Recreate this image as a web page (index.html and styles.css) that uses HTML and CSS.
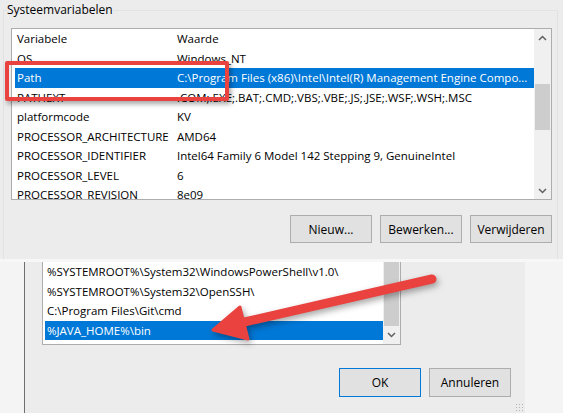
FILE: index.html
```html
<!DOCTYPE html>
<html lang="nl">
<head>
    <meta charset="UTF-8">
    <meta name="viewport" content="width=device-width, initial-scale=1.0">
    <title>Omgevingsvariabelen</title>
    <link rel="stylesheet" href="styles.css">
</head>
<body>
<div class="screen">
    <div class="sys-dialog">
        <fieldset class="group">
            <legend>Systeemvariabelen</legend>
            <div class="listview">
                <div class="lv-rows">
                    <div class="lv-row"><span class="col-name">Variabele</span><span class="col-val">Waarde</span></div>
                    <div class="lv-row"><span class="col-name">OS</span><span class="col-val">Windows_NT</span></div>
                    <div class="lv-row selected"><span class="col-name">Path</span><span class="col-val">C:\Program Files (x86)\Intel\Intel(R) Management Engine Compo...</span></div>
                    <div class="lv-row"><span class="col-name">PATHEXT</span><span class="col-val">.COM;.EXE;.BAT;.CMD;.VBS;.VBE;.JS;.JSE;.WSF;.WSH;.MSC</span></div>
                    <div class="lv-row"><span class="col-name">platformcode</span><span class="col-val">KV</span></div>
                    <div class="lv-row"><span class="col-name">PROCESSOR_ARCHITECTURE</span><span class="col-val">AMD64</span></div>
                    <div class="lv-row"><span class="col-name">PROCESSOR_IDENTIFIER</span><span class="col-val">Intel64 Family 6 Model 142 Stepping 9, GenuineIntel</span></div>
                    <div class="lv-row"><span class="col-name">PROCESSOR_LEVEL</span><span class="col-val">6</span></div>
                    <div class="lv-row"><span class="col-name">PROCESSOR_REVISION</span><span class="col-val">8e09</span></div>
                </div>
                <div class="vscroll">
                    <span class="sb-arrow"><svg width="9" height="6" viewBox="0 0 9 6"><path d="M1 5 L4.5 1.5 L8 5" fill="none" stroke="#606060" stroke-width="1.5"/></svg></span>
                    <span class="sb-track"><span class="sb-thumb sys-thumb"></span></span>
                    <span class="sb-arrow"><svg width="9" height="6" viewBox="0 0 9 6"><path d="M1 1 L4.5 4.5 L8 1" fill="none" stroke="#606060" stroke-width="1.5"/></svg></span>
                </div>
            </div>
            <div class="btn-row">
                <button class="btn">Nieuw...</button>
                <button class="btn">Bewerken...</button>
                <button class="btn">Verwijderen</button>
            </div>
        </fieldset>
    </div>

    <div class="edit-dialog">
        <div class="edit-frame">
            <div class="path-list">
                <div class="pl-rows">
                    <div class="pl-row">%SYSTEMROOT%\System32\WindowsPowerShell\v1.0\</div>
                    <div class="pl-row">%SYSTEMROOT%\System32\OpenSSH\</div>
                    <div class="pl-row">C:\Program Files\Git\cmd</div>
                    <div class="pl-row selected">%JAVA_HOME%\bin</div>
                </div>
                <div class="vscroll">
                    <span class="sb-track"><span class="sb-thumb path-thumb"></span></span>
                    <span class="sb-arrow"><svg width="9" height="6" viewBox="0 0 9 6"><path d="M1 1 L4.5 4.5 L8 1" fill="none" stroke="#606060" stroke-width="1.5"/></svg></span>
                </div>
            </div>
            <div class="btn-row edit-buttons">
                <button class="btn default">OK</button>
                <button class="btn">Annuleren</button>
            </div>
            <span class="grip"></span>
        </div>
    </div>

    <!-- annotaties -->
    <div class="callout-box"></div>
    <svg class="callout-arrow" width="563" height="413" viewBox="0 0 563 413">
        <line x1="432" y1="279" x2="240" y2="323" stroke="#e9423f" stroke-width="9" stroke-linecap="round"/>
        <polygon points="213,330 240,307 248,339" fill="#e9423f" stroke="#e9423f" stroke-width="3" stroke-linejoin="round"/>
    </svg>
</div>
</body>
</html>
```

FILE: styles.css
```css
* {
    box-sizing: border-box;
}

body {
    margin: 0;
    font-family: 'Open Sans', 'Noto Sans', sans-serif;
    font-size: 11.5px;
    color: #000;
    background: #f4f4f4;
}

.screen {
    position: relative;
    width: 563px;
    height: 413px;
    overflow: hidden;
}

/* bovenste venster */
.sys-dialog {
    height: 262px;
    background: #ececec;
    border-bottom: 3px solid #f7f7f7;
}

.group {
    margin: 0 5px 0 3px;
    padding: 8px 0 0 7px;
    height: 259px;
    border: 1px solid #e2e2e2;
    border-bottom: none;
    min-width: 0;
}

.group legend {
    margin-left: -4px;
    padding: 0;
    line-height: 20px;
    font-size: 12px;
}

.listview {
    display: flex;
    width: 541px;
    height: 172px;
    border: 1px solid #adadad;
    background: #fff;
}

.lv-rows {
    flex: 1;
    padding-left: 3px;
    overflow: hidden;
}

.lv-row {
    display: flex;
    height: 19.5px;
    line-height: 19.5px;
    white-space: nowrap;
}

.col-name {
    width: 160px;
    padding-left: 2px;
    flex-shrink: 0;
}

.col-val {
    padding-left: 2px;
}

.selected {
    background: #0078d7;
    color: #fff;
}

.vscroll {
    display: flex;
    flex-direction: column;
    width: 17px;
    background: #f0f0f0;
}

.sb-arrow {
    height: 17px;
    display: flex;
    align-items: center;
    justify-content: center;
    flex-shrink: 0;
}

.sb-track {
    flex: 1;
    padding: 0 1px;
}

.sb-thumb {
    display: block;
    background: #cdcdcd;
}

.sys-thumb {
    margin-top: 38px;
    height: 46px;
}

.path-thumb {
    height: 100%;
}

.btn-row {
    display: flex;
    justify-content: flex-end;
    gap: 8px;
    width: 541px;
    margin-top: 15px;
}

.btn {
    width: 82px;
    height: 28px;
    padding: 0;
    border: 1px solid #adadad;
    background: #e1e1e1;
    font-family: inherit;
    font-size: 12px;
    color: #000;
}

.btn.default {
    border-color: #0078d7;
}

/* onderste venster */
.edit-dialog {
    height: 151px;
    padding-left: 24px;
    background: #f4f4f4;
}

.edit-frame {
    position: relative;
    width: 501px;
    height: 100%;
    padding: 0 14px 0 17px;
    border-left: 1px solid #6e6e6e;
    background: #ececec;
}

.path-list {
    display: flex;
    width: 359px;
    height: 83px;
    border: 1px solid #adadad;
    border-top: none;
    background: #fff;
}

.pl-rows {
    flex: 1;
    padding-left: 2px;
}

.pl-row {
    height: 19.5px;
    line-height: 19.5px;
    padding-left: 2px;
    white-space: nowrap;
}

.path-list .vscroll {
    padding-bottom: 1px;
}

.edit-buttons {
    width: auto;
    margin-top: 23px;
}

.edit-buttons .btn {
    height: 29px;
}

.grip {
    position: absolute;
    right: 2px;
    bottom: 2px;
    width: 8px;
    height: 8px;
    background: radial-gradient(circle, #b4b4b4 0.8px, transparent 1px) 0 0 / 3px 3px;
}

/* rode markeringen */
.callout-box {
    position: absolute;
    left: 5px;
    top: 61px;
    width: 224px;
    height: 40px;
    border: 4px solid #e9423f;
    border-radius: 2px;
    box-shadow: 2px 3px 5px rgba(0, 0, 0, 0.35);
}

.callout-arrow {
    position: absolute;
    left: 0;
    top: 0;
    pointer-events: none;
    filter: drop-shadow(2px 3px 3px rgba(0, 0, 0, 0.35));
}
```
